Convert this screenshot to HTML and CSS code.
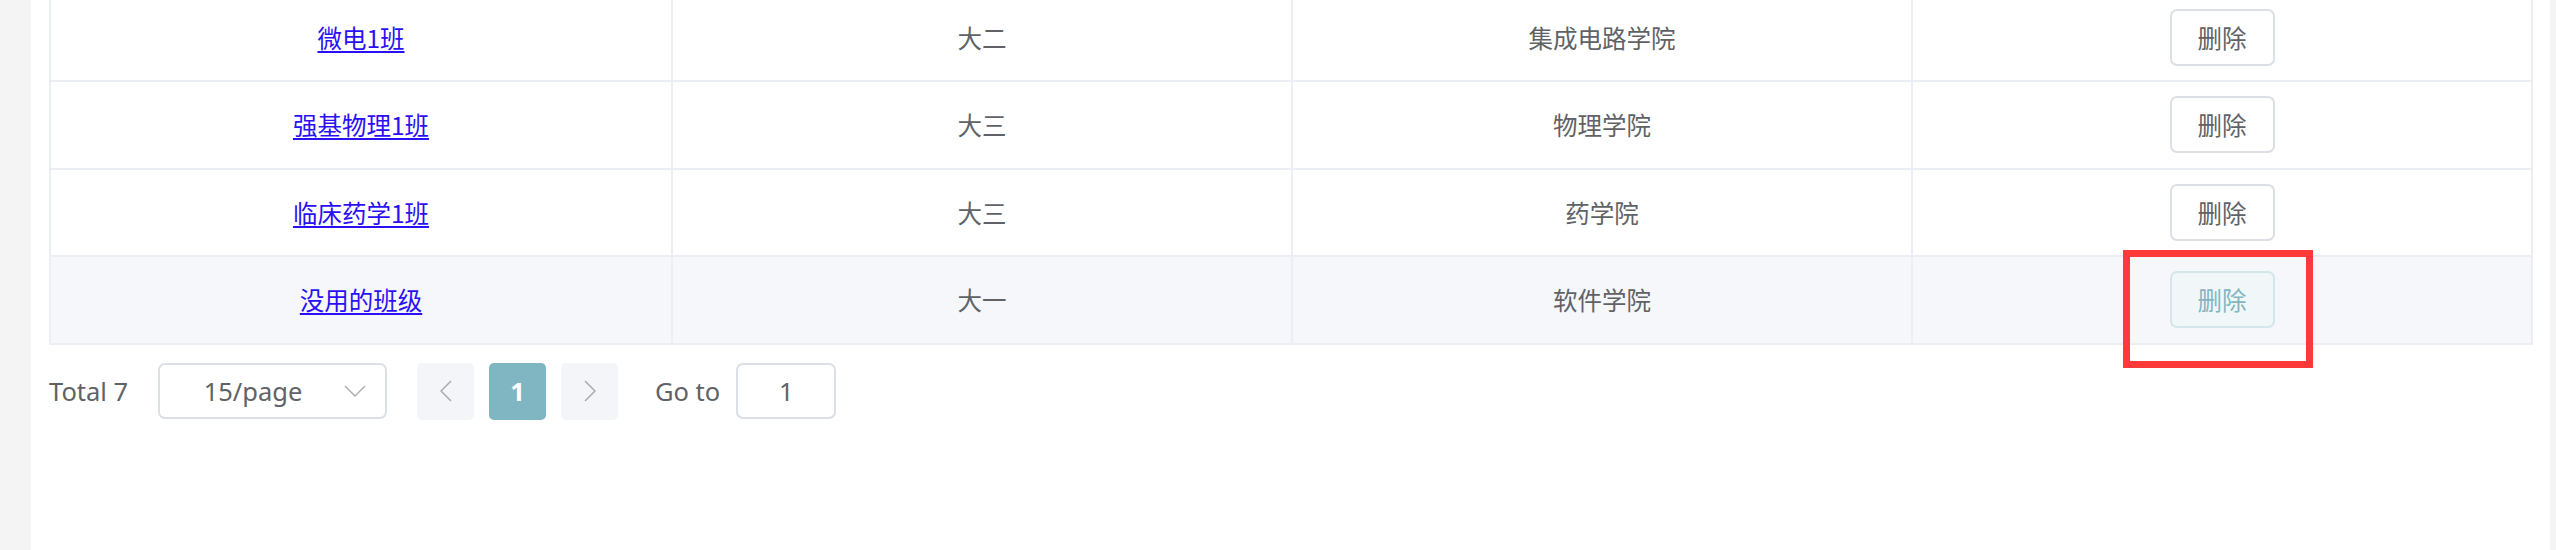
FILE: index.html
```html
<!DOCTYPE html>
<html lang="zh-CN">
<head>
<meta charset="utf-8">
<title>班级列表</title>
<link rel="stylesheet" href="styles.css">
</head>
<body>
<div class="main">
  <div class="table">
    <div class="row">
      <div class="cell"><a href="#" class="link">微电1班</a></div>
      <div class="cell">大二</div>
      <div class="cell">集成电路学院</div>
      <div class="cell"><button class="btn">删除</button></div>
    </div>
    <div class="row">
      <div class="cell"><a href="#" class="link">强基物理1班</a></div>
      <div class="cell">大三</div>
      <div class="cell">物理学院</div>
      <div class="cell"><button class="btn">删除</button></div>
    </div>
    <div class="row">
      <div class="cell"><a href="#" class="link">临床药学1班</a></div>
      <div class="cell">大三</div>
      <div class="cell">药学院</div>
      <div class="cell"><button class="btn">删除</button></div>
    </div>
    <div class="row row-hover">
      <div class="cell"><a href="#" class="link">没用的班级</a></div>
      <div class="cell">大一</div>
      <div class="cell">软件学院</div>
      <div class="cell"><button class="btn btn-hover">删除</button></div>
    </div>
  </div>

  <div class="pagination">
    <span class="total">Total 7</span>
    <div class="select">
      <span class="select-text">15/page</span>
      <span class="select-icon">
        <svg viewBox="0 0 22 12" width="22" height="12"><path d="M1 1 L11 11 L21 1" fill="none" stroke="#a8abb2" stroke-width="1.4"/></svg>
      </span>
    </div>
    <button class="pg-btn">
      <svg viewBox="0 0 12 22" width="12" height="22"><path d="M11 1 L1 11 L11 21" fill="none" stroke="#a8abb2" stroke-width="1.5"/></svg>
    </button>
    <button class="pg-btn pg-active">1</button>
    <button class="pg-btn">
      <svg viewBox="0 0 12 22" width="12" height="22"><path d="M1 1 L11 11 L1 21" fill="none" stroke="#a8abb2" stroke-width="1.5"/></svg>
    </button>
    <span class="goto">Go to</span>
    <div class="goto-input">1</div>
  </div>

  <div class="annot"></div>
</div>
</body>
</html>
```

FILE: styles.css
```css
* { box-sizing: border-box; }
html, body { margin: 0; padding: 0; }
body {
  background: #f4f4f4;
  width: 2556px;
  height: 550px;
  overflow: hidden;
  font-family: "Noto Sans", "Noto Sans CJK SC", sans-serif;
  color: #606266;
}
.main {
  position: relative;
  margin-left: 31px;
  width: 2519px;
  height: 550px;
  background: #ffffff;
  overflow: hidden;
  padding-left: 18px;
}
.table {
  margin-top: -5.5px;
  width: 2484px;
  border-left: 2px solid #ebeef5;
}
.row {
  display: grid;
  grid-template-columns: 622px 620px 620px 620px;
  height: 87.5px;
  border-bottom: 2px solid #ebeef5;
  background: #ffffff;
}
.row-hover { background: #f5f7fa; }
.cell {
  display: flex;
  align-items: center;
  justify-content: center;
  border-right: 2px solid #ebeef5;
  font-size: 24.5px;
  font-family: "Noto Sans CJK SC", sans-serif;
  color: #606266;
}
.link {
  color: #2a10f5;
  text-decoration: underline;
  text-underline-offset: 3px;
  font-family: "Noto Sans CJK SC", sans-serif;
}
.btn {
  width: 105px;
  height: 57px;
  border: 2px solid #dcdfe6;
  border-radius: 7px;
  background: #ffffff;
  color: #606266;
  font-size: 24.5px;
  font-family: "Noto Sans CJK SC", sans-serif;
  padding: 0;
  display: flex;
  align-items: center;
  justify-content: center;
}
.btn-hover {
  background: #f1f7f8;
  border-color: #d3e7eb;
  color: #80b6c1;
}
.pagination {
  display: flex;
  align-items: center;
  height: 58px;
  margin-top: 17.5px;
}
.total {
  font-size: 25.5px;
  color: #606266;
  width: 109px;
}
.select {
  width: 229px;
  height: 56px;
  border: 2px solid #dcdfe6;
  border-radius: 7px;
  display: flex;
  align-items: center;
  padding: 0 19px;
  margin-right: 30px;
}
.select-text {
  flex: 1;
  text-align: center;
  font-size: 25.5px;
  color: #606266;
}
.select-icon {
  width: 22px;
  margin-left: 17px;
  display: flex;
  align-items: center;
  justify-content: center;
}
.pg-btn {
  width: 57px;
  height: 57px;
  border: none;
  border-radius: 5px;
  background: #f4f5f9;
  margin-right: 15px;
  padding: 0;
  display: flex;
  align-items: center;
  justify-content: center;
  font-family: "Noto Sans", sans-serif;
}
.pg-active {
  background: #80b6c1;
  color: #ffffff;
  font-weight: 700;
  font-size: 25.5px;
}
.goto {
  margin-left: 22px;
  font-size: 25.5px;
  color: #606266;
  margin-right: 16px;
}
.goto-input {
  width: 100px;
  height: 56px;
  border: 2px solid #dcdfe6;
  border-radius: 7px;
  display: flex;
  align-items: center;
  justify-content: center;
  font-size: 25.5px;
  color: #606266;
}
.annot {
  position: absolute;
  left: 2092px;
  top: 250px;
  width: 190px;
  height: 118px;
  border: 7px solid #fc3a3a;
}
```
